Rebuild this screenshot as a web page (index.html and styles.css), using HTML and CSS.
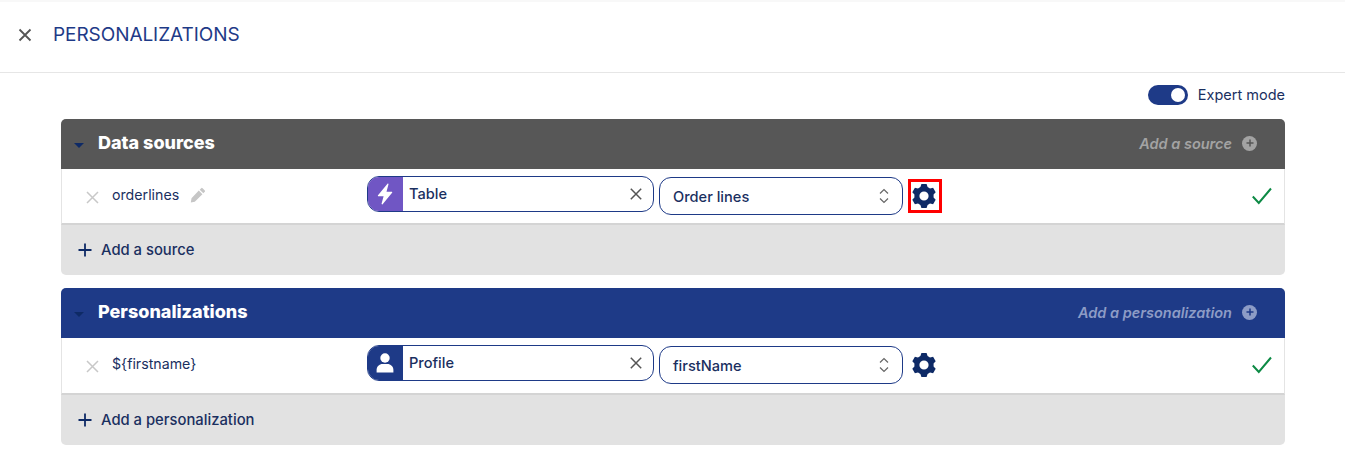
FILE: index.html
```html
<!DOCTYPE html>
<html lang="en">
<head>
<meta charset="utf-8">
<title>Personalizations</title>
<link rel="stylesheet" href="styles.css">
</head>
<body>
<header class="topbar">
  <svg class="close-icon" width="14" height="14" viewBox="0 0 14 14"><path d="M1.500 1.500l11 11M12.500 1.500l-11 11"/></svg>
  <h1 class="title">PERSONALIZATIONS</h1>
</header>
<main class="content">
  <div class="expert">
    <span class="toggle"><span class="knob"></span></span>
    <span class="expert-label">Expert mode</span>
  </div>

  <section class="panel">
    <div class="panel-head head-grey">
      <span class="caret"></span>
      <h2 class="panel-title">Data sources</h2>
      <span class="add-link">Add a source</span>
      <span class="add-dot"><svg width="8" height="8" viewBox="0 0 8 8"><path d="M4 .5v7M.5 4h7"/></svg></span>
    </div>
    <div class="row">
      <svg class="row-x" width="13" height="13" viewBox="0 0 13 13"><path d="M1 1l11 11M12 1L1 12"/></svg>
      <div class="name"><span>orderlines</span>
        <svg class="pencil" width="16" height="16" viewBox="0 0 16 16"><path d="M11.200 1.200a1 1 0 0 1 1.400 0l2.200 2.200a1 1 0 0 1 0 1.400l-1.500 1.500-3.600-3.600zM8.800 3.600l3.600 3.600-7.600 7.600-4 .7.7-4.200z"/></svg>
      </div>
      <div class="chip">
        <span class="chip-icon chip-purple"><svg width="18" height="22" viewBox="0 0 18 22"><path d="M11.500 0.800 2 12.200c-.4.5 0 1.100.6 1.100h5L5.600 20.600c-.2.7.6 1.100 1 .6l9.500-11.400c.4-.5 0-1.100-.6-1.100h-5l2-7.400c.2-.7-.6-1.100-1-.5z"/></svg></span>
        <span class="chip-text">Table</span>
        <svg class="chip-x" width="12" height="12" viewBox="0 0 12 12"><path d="M.8.8l10.400 10.400M11.200.8 .8 11.200"/></svg>
      </div>
      <div class="select">
        <span class="select-text">Order lines</span>
        <svg class="updown" width="10" height="16" viewBox="0 0 10 16"><path d="M1 5.500 5 1.500l4 4M1 10.500l4 4 4-4"/></svg>
      </div>
      <span class="gear gear-marked"><svg width="24" height="24" viewBox="0 0 24 24"><path fill-rule="evenodd" d="M8.400 3 9.400 0H14.600L15.600 3 18 4.380 21.090 3.750 23.690 8.250 21.590 10.620V13.380L23.690 15.750 21.090 20.250 18 19.620 15.600 21 14.600 24H9.400L8.400 21 6 19.620 2.910 20.250 .31 15.750 2.410 13.380V10.620L.31 8.250 2.910 3.750 6 4.380zM12 7.400a4.600 4.600 0 1 0 0 9.200 4.600 4.600 0 0 0 0-9.200z"/></svg></span>
      <svg class="check" width="22" height="18" viewBox="0 0 22 18"><path d="M1.800 9.500l6 6.500L20 1.500"/></svg>
    </div>
    <div class="panel-foot">
      <svg class="plus" width="14" height="14" viewBox="0 0 14 14"><path d="M7 .5v13M.5 7h13"/></svg>
      <span>Add a source</span>
    </div>
  </section>

  <section class="panel">
    <div class="panel-head head-blue">
      <span class="caret"></span>
      <h2 class="panel-title">Personalizations</h2>
      <span class="add-link">Add a personalization</span>
      <span class="add-dot"><svg width="8" height="8" viewBox="0 0 8 8"><path d="M4 .5v7M.5 4h7"/></svg></span>
    </div>
    <div class="row row-tall">
      <svg class="row-x" width="13" height="13" viewBox="0 0 13 13"><path d="M1 1l11 11M12 1L1 12"/></svg>
      <div class="name"><span>${firstname}</span></div>
      <div class="chip">
        <span class="chip-icon chip-blue"><svg width="18" height="20" viewBox="0 0 18 20"><circle cx="9" cy="5" r="4.700"/><path d="M.6 19.500v-2.500c0-3.500 2.800-6 6-6h4.800c3.200 0 6 2.500 6 6v2.500z"/></svg></span>
        <span class="chip-text">Profile</span>
        <svg class="chip-x" width="12" height="12" viewBox="0 0 12 12"><path d="M.8.8l10.400 10.400M11.200.8 .8 11.200"/></svg>
      </div>
      <div class="select">
        <span class="select-text">firstName</span>
        <svg class="updown" width="10" height="16" viewBox="0 0 10 16"><path d="M1 5.500 5 1.500l4 4M1 10.500l4 4 4-4"/></svg>
      </div>
      <span class="gear"><svg width="24" height="24" viewBox="0 0 24 24"><path fill-rule="evenodd" d="M8.400 3 9.400 0H14.600L15.600 3 18 4.380 21.090 3.750 23.690 8.250 21.590 10.620V13.380L23.690 15.750 21.090 20.250 18 19.620 15.600 21 14.600 24H9.400L8.400 21 6 19.620 2.910 20.250 .31 15.750 2.410 13.380V10.620L.31 8.250 2.910 3.750 6 4.380zM12 7.400a4.600 4.600 0 1 0 0 9.200 4.600 4.600 0 0 0 0-9.200z"/></svg></span>
      <svg class="check" width="22" height="18" viewBox="0 0 22 18"><path d="M1.800 9.500l6 6.500L20 1.500"/></svg>
    </div>
    <div class="panel-foot">
      <svg class="plus" width="14" height="14" viewBox="0 0 14 14"><path d="M7 .5v13M.5 7h13"/></svg>
      <span>Add a personalization</span>
    </div>
  </section>
</main>
</body>
</html>
```
FILE: styles.css
```css
* { box-sizing: border-box; }
html, body { margin: 0; padding: 0; }
body {
  width: 1345px;
  height: 466px;
  overflow: hidden;
  background: #fff;
  color: #1a2f5f;
  font-family: "Inter", "Liberation Sans", sans-serif;
  font-size: 14px;
}
svg { display: block; flex: none; }
.topbar {
  height: 73px;
  display: flex;
  align-items: center;
  padding: 0 0 5px 18px;
  border-top: 2px solid #f8f8f8;
  border-bottom: 1px solid #e6e6e6;
}
.close-icon path { fill: none; stroke: #555; stroke-width: 1.800; }
.title {
  margin: 0 0 0 21px;
  font-size: 19px;
  font-weight: 400;
  color: #1e3a87;
  letter-spacing: -.07px;
}
.content { padding: 12px 60px 0 61px; }
.expert {
  height: 20px;
  display: flex;
  align-items: center;
  justify-content: flex-end;
  gap: 10px;
  margin-bottom: 14px;
}
.toggle {
  width: 40px;
  height: 20px;
  padding: 3px;
  border-radius: 10px;
  background: #1e3a87;
  display: flex;
  justify-content: flex-end;
}
.knob { width: 14px; height: 14px; border-radius: 50%; background: #fff; }
.expert-label { font-size: 14.500px; color: #1a2f5f; padding-bottom: 2px; }
.panel {
  margin-bottom: 13px;
  border-radius: 5px;
  overflow: hidden;
  background: #e2e2e2;
}
.panel-head {
  height: 50px;
  display: flex;
  align-items: center;
  padding: 0 28px 2px 13px;
}
.head-grey { background: #575757; color: #a3a3a3; }
.head-blue { background: #1e3a87; color: #8d9cc6; }
.caret {
  width: 0;
  height: 0;
  margin-top: 4px;
  border-left: 5px solid transparent;
  border-right: 5px solid transparent;
  border-top: 5px solid #0e2a66;
}
.panel-title {
  margin: 0 auto 2px 14px;
  color: #fff;
  font-size: 18px;
  font-weight: 800;
}
.add-link { font-size: 14.500px; font-style: italic; font-weight: 600; margin-right: 1px; }
.add-dot {
  width: 15px;
  height: 15px;
  margin-left: 9px;
  border-radius: 50%;
  background: currentColor;
  display: flex;
  align-items: center;
  justify-content: center;
}
.head-grey .add-dot path { stroke: #575757; stroke-width: 1.500; }
.head-blue .add-dot path { stroke: #1e3a87; stroke-width: 1.500; }
.row {
  height: 56px;
  display: flex;
  align-items: center;
  padding: 0 11px 0 24px;
  background: #fff;
  border-left: 1px solid #e4e4e4;
  border-right: 1px solid #e4e4e4;
  border-bottom: 2px solid #d4d4d4;
}
.row-tall { height: 57px; padding-bottom: 1px; }
.row-x { margin-top: 3px; }
.row-x path { stroke: #c8c8c8; stroke-width: 1.500; fill: none; }
.name {
  width: 255px;
  margin-left: 13px;
  margin-top: -3px;
  display: flex;
  align-items: center;
  gap: 11px;
  font-size: 14.200px;
  color: #1a2f5f;
}
.pencil path { fill: #c6c6c6; }
.chip {
  width: 287px;
  height: 36px;
  margin-top: -5px;
  display: flex;
  align-items: center;
  border: 1px solid #1e3a87;
  border-radius: 12px;
  overflow: hidden;
  padding-right: 11px;
}
.chip-icon {
  width: 36px;
  height: 36px;
  margin-left: -1px;
  display: flex;
  align-items: center;
  justify-content: center;
}
.chip-icon svg { fill: #fff; }
.chip-purple { background: #7056c4; }
.chip-blue { background: #1e3a87; }
.chip-text { flex: 1; margin-left: 6px; font-size: 14.600px; font-weight: 500; }
.chip-x path { stroke: #555; stroke-width: 1.500; fill: none; }
.select {
  width: 244px;
  height: 38px;
  margin-left: 5px;
  display: flex;
  align-items: center;
  justify-content: space-between;
  padding: 0 13px;
  border: 1px solid #1e3a87;
  border-radius: 12px;
}
.select-text { font-size: 14.600px; font-weight: 500; padding-top: 2px; }
.updown path { stroke: #666; stroke-width: 1.200; fill: none; }
.gear {
  width: 34px;
  height: 34px;
  margin-left: 5px;
  display: flex;
  align-items: center;
  justify-content: center;
  border: 3px solid transparent;
}
.gear svg { fill: #0e2a66; margin-left: -2px; }
.gear-marked { border-color: #f00; }
.check { margin-left: auto; }
.check path { stroke: #0d8a45; stroke-width: 2; fill: none; }
.panel-foot {
  height: 50px;
  display: flex;
  align-items: center;
  gap: 9px;
  padding: 0 0 1px 17px;
  font-size: 14.800px;
  font-weight: 500;
  color: #1a2f5f;
}
.plus path { stroke: #0e2a66; stroke-width: 1.800; fill: none; }
```
